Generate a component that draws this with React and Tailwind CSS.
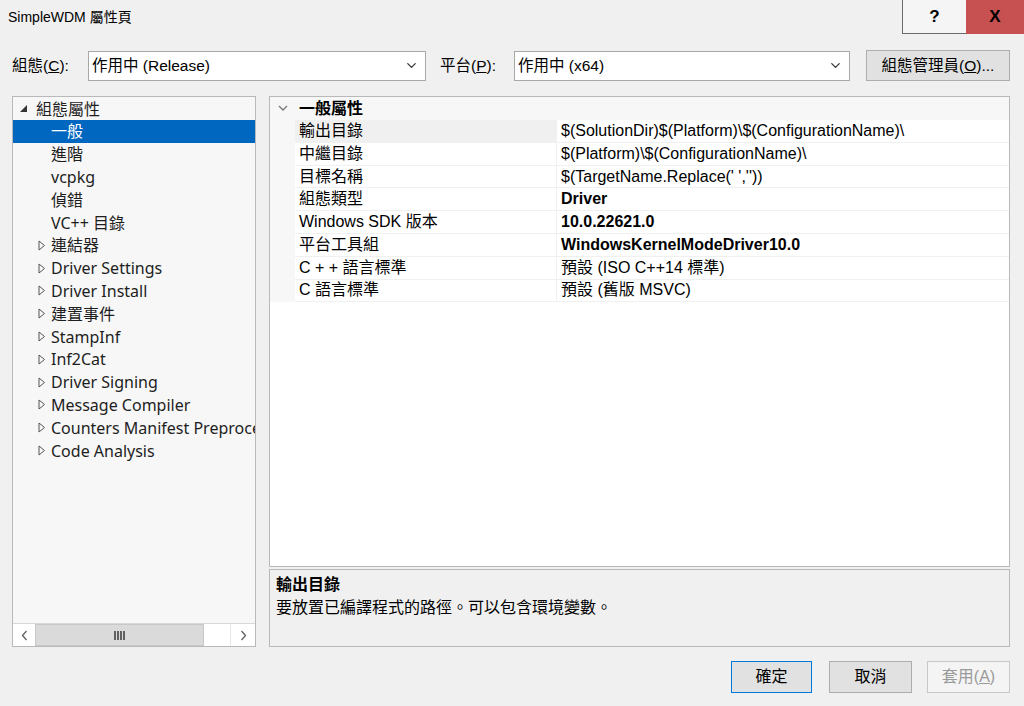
import { ChevronDown } from "lucide-react";

const ui = { fontFamily: '"Liberation Sans", "Noto Sans CJK TC", sans-serif' };
const tree = { fontFamily: '"Noto Sans", "Noto Sans CJK TC", sans-serif' };

const treeItems = [
  { label: "一般", selected: true },
  { label: "進階" },
  { label: "vcpkg" },
  { label: "偵錯" },
  { label: "VC++ 目錄" },
  { label: "連結器", arrow: true },
  { label: "Driver Settings", arrow: true },
  { label: "Driver Install", arrow: true },
  { label: "建置事件", arrow: true },
  { label: "StampInf", arrow: true },
  { label: "Inf2Cat", arrow: true },
  { label: "Driver Signing", arrow: true },
  { label: "Message Compiler", arrow: true },
  { label: "Counters Manifest Preprocessor", arrow: true },
  { label: "Code Analysis", arrow: true },
];

const props = [
  { name: "輸出目錄", value: "$(SolutionDir)$(Platform)\\$(ConfigurationName)\\", active: true },
  { name: "中繼目錄", value: "$(Platform)\\$(ConfigurationName)\\" },
  { name: "目標名稱", value: "$(TargetName.Replace(' ',''))" },
  { name: "組態類型", value: "Driver", bold: true },
  { name: "Windows SDK 版本", value: "10.0.22621.0", bold: true },
  { name: "平台工具組", value: "WindowsKernelModeDriver10.0", bold: true },
  { name: "C + + 語言標準", value: "預設 (ISO C++14 標準)" },
  { name: "C 語言標準", value: "預設 (舊版 MSVC)" },
];

function OpenTriangle() {
  return (
    <svg width="8" height="11" viewBox="0 0 8 11" className="shrink-0">
      <path d="M1 1 L6.5 5.5 L1 10 Z" fill="none" stroke="#555" strokeWidth="1" />
    </svg>
  );
}

function Combo({ value, width }) {
  return (
    <div
      className="h-[30px] shrink-0 bg-white border border-[#a8a8a8] flex items-center pl-[3px] pr-[6px] text-[15.5px] text-black"
      style={{ width }}
    >
      <span className="flex-1">{value}</span>
      <ChevronDown size={15} strokeWidth={2} color="#333" />
    </div>
  );
}

export default function App() {
  return (
    <div className="w-[1024px] h-[706px] bg-[#f0f0f0] flex flex-col overflow-hidden" style={ui}>
      {/* title bar */}
      <div className="h-[35px] flex items-start">
        <div className="flex-1 h-[35px] flex items-center pl-[8px] text-[14px] text-black">SimpleWDM 屬性頁</div>
        <div className="w-[64px] h-[34px] bg-[#f5f5f5] border-l border-b border-[#6b6b6b] flex items-center justify-center text-[17px] font-bold text-black">
          ?
        </div>
        <div className="w-[58px] h-[34px] bg-[#c75050] flex items-center justify-center text-[17px] font-bold text-black">
          X
        </div>
      </div>

      {/* config row */}
      <div className="mt-[15px] h-[31px] flex items-center pl-[12px] text-[15.5px] text-black">
        <span className="w-[76px] shrink-0">
          組態(<span className="underline">C</span>):
        </span>
        <Combo value="作用中 (Release)" width={338} />
        <span className="w-[88px] shrink-0 pl-[14px]">
          平台(<span className="underline">P</span>):
        </span>
        <Combo value="作用中 (x64)" width={336} />
        <div className="ml-[16px] shrink-0 w-[144px] h-[31px] bg-[#e1e1e1] border border-[#adadad] flex items-center justify-center">
          組態管理員(<span className="underline">O</span>)...
        </div>
      </div>

      {/* main area */}
      <div className="mt-[15px] flex pl-[12px] h-[551px]">
        {/* tree */}
        <div className="w-[244px] h-[551px] border border-[#b9b9b9] bg-[#f7f7f7] flex flex-col" style={tree}>
          <div className="flex-1 overflow-hidden">
            <div className="h-[23px] flex items-center pl-[7px] text-[16px] text-[#1e1e1e]">
              <svg width="8" height="8" viewBox="0 0 8 8" className="shrink-0">
                <path d="M7 0 L7 7 L0 7 Z" fill="#333" />
              </svg>
              <span className="ml-[8px] whitespace-nowrap">組態屬性</span>
            </div>
            {treeItems.map((it) => (
              <div
                key={it.label}
                className={
                  "h-[22.8px] flex items-center pl-[25px] text-[16px] whitespace-nowrap overflow-hidden " +
                  (it.selected ? "bg-[#0067c0] text-white" : "text-[#1e1e1e]")
                }
              >
                <span className="w-[13px] shrink-0 flex items-center">{it.arrow && <OpenTriangle />}</span>
                <span className="shrink-0">{it.label}</span>
              </div>
            ))}
          </div>
          {/* horizontal scrollbar */}
          <div className="h-[23px] flex border-t border-[#d8d8d8] bg-[#f0f0f0]">
            <div className="w-[22px] bg-white flex items-center justify-center">
              <svg width="7" height="11" viewBox="0 0 7 11">
                <path d="M5.5 1 L1.5 5.5 L5.5 10" fill="none" stroke="#606060" strokeWidth="1.3" />
              </svg>
            </div>
            <div className="w-[169px] bg-[#dadada] border border-[#c8c8c8] flex items-center justify-center gap-[1px]">
              <span className="w-[2px] h-[9px] bg-[#606060]" />
              <span className="w-[2px] h-[9px] bg-[#606060]" />
              <span className="w-[2px] h-[9px] bg-[#606060]" />
              <span className="w-[2px] h-[9px] bg-[#606060]" />
            </div>
            <div className="w-[26px] bg-white" />
            <div className="flex-1 bg-white border-l border-[#e6e6e6] flex items-center justify-center">
              <svg width="7" height="11" viewBox="0 0 7 11">
                <path d="M1.5 1 L5.5 5.5 L1.5 10" fill="none" stroke="#606060" strokeWidth="1.3" />
              </svg>
            </div>
          </div>
        </div>

        {/* right side */}
        <div className="ml-[13px] w-[741px] flex flex-col">
          <div className="h-[471px] border border-[#b9b9b9] bg-white flex flex-col text-[16px] text-black">
            <div className="h-[23px] flex items-center bg-[#f7f7f7]">
              <span className="w-[25px] flex justify-center">
                <svg width="10" height="7" viewBox="0 0 10 7">
                  <path d="M1 1 L5 5 L9 1" fill="none" stroke="#777" strokeWidth="1.3" />
                </svg>
              </span>
              <span className="font-bold pl-[4px]">一般屬性</span>
            </div>
            {props.map((p) => (
              <div key={p.name} className="h-[22.8px] flex">
                <div className="w-[25px] bg-[#f7f7f7]" />
                <div
                  className={
                    "w-[261px] flex items-center pl-[4px] border-b border-[#f0f0f0] whitespace-nowrap " +
                    (p.active ? "bg-[#f0f0f0]" : "bg-white")
                  }
                >
                  {p.name}
                </div>
                <div
                  className={
                    "flex-1 flex items-center pl-[4px] border-b border-l border-[#f0f0f0] whitespace-nowrap " +
                    (p.bold ? "font-bold" : "")
                  }
                >
                  {p.value}
                </div>
              </div>
            ))}
            <div className="flex-1" />
          </div>
          <div className="mt-[2px] h-[78px] border border-[#b9b9b9] bg-[#f0f0f0] px-[6px] pt-[3px] text-[16px] text-black">
            <div className="font-bold leading-[23px]">輸出目錄</div>
            <div className="leading-[23px]">要放置已編譯程式的路徑。可以包含環境變數。</div>
          </div>
        </div>
      </div>

      {/* bottom buttons */}
      <div className="mt-[14px] flex justify-end pr-[14px] text-[16px]">
        <div className="w-[81px] h-[32px] bg-[#e1e1e1] border border-[#0078d7] flex items-center justify-center text-black">
          確定
        </div>
        <div className="ml-[17px] w-[83px] h-[32px] bg-[#e1e1e1] border border-[#adadad] flex items-center justify-center text-black">
          取消
        </div>
        <div className="ml-[15px] w-[83px] h-[32px] bg-[#f4f4f4] border border-[#c8c8c8] flex items-center justify-center text-[#9a9a9a]">
          套用(<span className="underline">A</span>)
        </div>
      </div>
    </div>
  );
}
